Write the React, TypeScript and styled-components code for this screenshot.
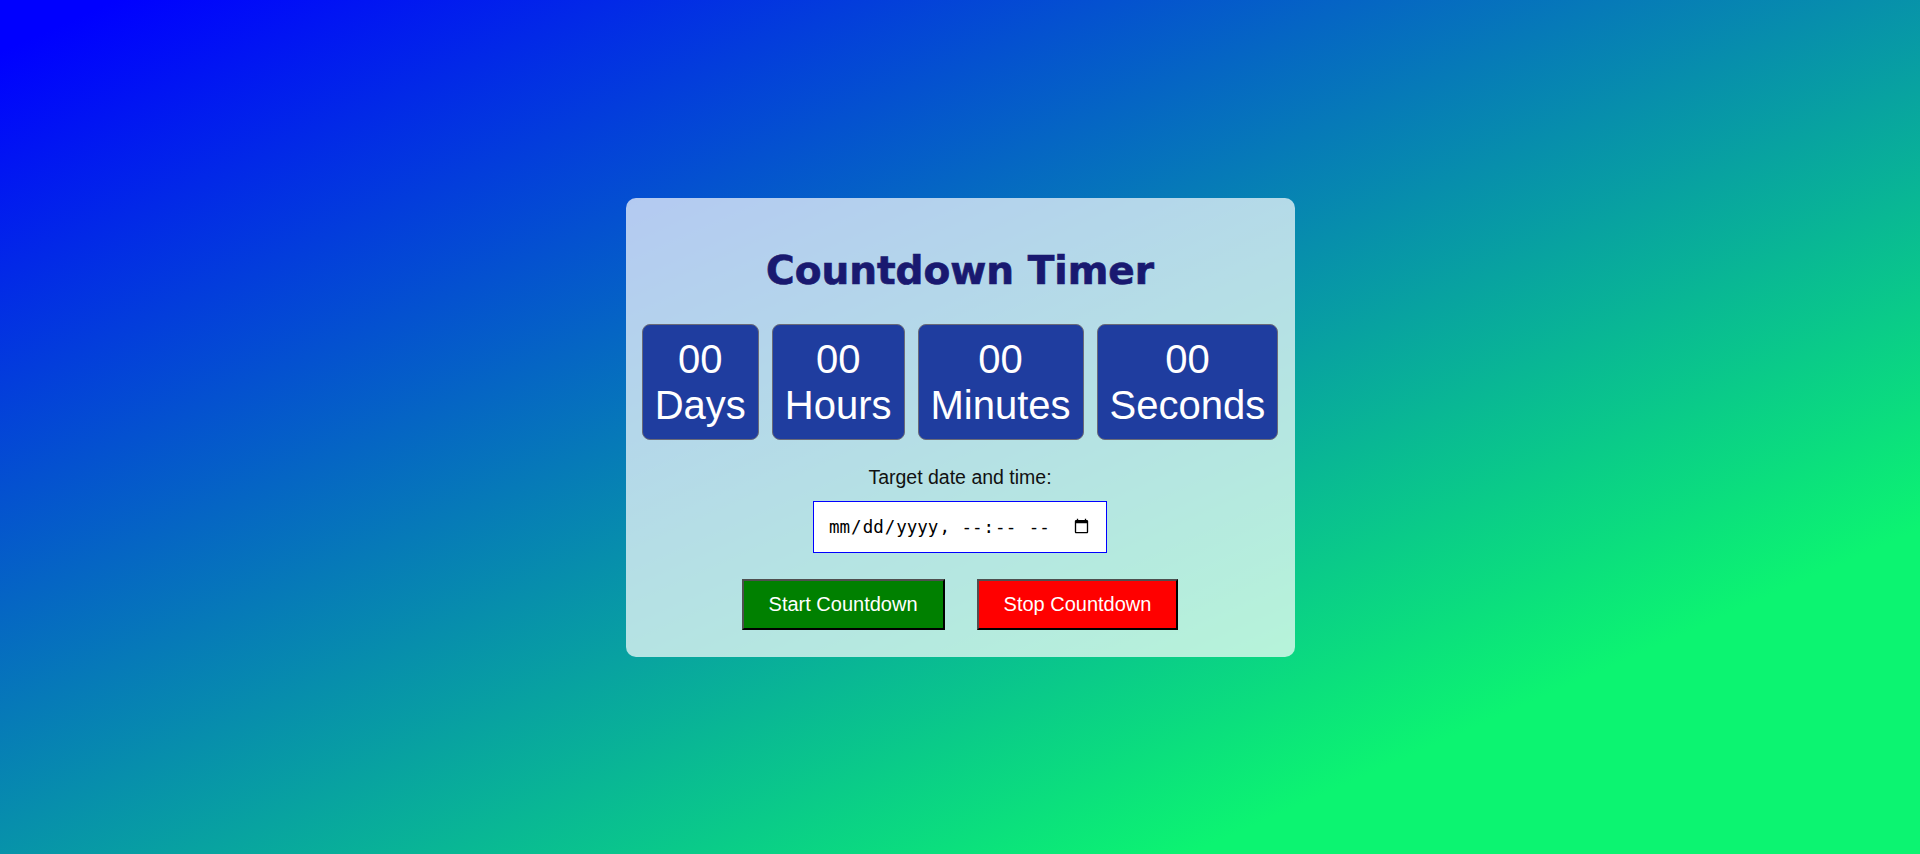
import React from "react";
import styled, { createGlobalStyle } from "styled-components";

const GlobalStyle = createGlobalStyle`
  html, body {
    margin: 0;
    padding: 0;
  }
  body {
    font-family: "Liberation Sans", Arial, sans-serif;
  }
`;

const Page = styled.div`
  min-height: 100vh;
  display: flex;
  align-items: center;
  justify-content: center;
  background: linear-gradient(to bottom right, #0000ff 3%, #0cf471 81%);
`;

const Card = styled.div`
  box-sizing: border-box;
  width: 669px;
  padding: 50px 15px 27px;
  border-radius: 10px;
  background: rgba(255, 255, 255, 0.7);
  display: flex;
  flex-direction: column;
  align-items: center;
`;

const Title = styled.h1`
  margin: 0;
  font-family: "Arial Black", "DejaVu Sans", sans-serif;
  font-weight: 900;
  font-size: 39px;
  line-height: 46px;
  color: #191970;
  -webkit-text-stroke: 0.7px #191970;
`;

const TimerRow = styled.div`
  margin-top: 30px;
  display: flex;
  gap: 13px;
  justify-content: center;
`;

const TimeBox = styled.div`
  display: flex;
  flex-direction: column;
  align-items: center;
  padding: 11px 12px;
  border: 1px solid #6a6a78;
  border-radius: 8px;
  background: #1f3d9f;
  color: #ffffff;
  font-size: 40px;
  line-height: 46px;
`;

const Label = styled.label`
  margin-top: 26px;
  font-size: 19.5px;
  line-height: 22px;
  color: #111;
`;

const DateInput = styled.input`
  margin-top: 13px;
  box-sizing: border-box;
  width: 294px;
  height: 52px;
  padding: 0 14px;
  border: 1px solid #0000ff;
  background: #ffffff;
  font-family: "DejaVu Sans Mono", monospace;
  font-size: 17.5px;
  color: #000;
  outline: none;

  &::-webkit-calendar-picker-indicator {
    margin-left: 10px;
  }
`;

const ButtonRow = styled.div`
  margin-top: 26px;
  display: flex;
  gap: 32px;
`;

const ActionButton = styled.button<{ $bg: string }>`
  padding: 12px 25px;
  border-width: 2px;
  border-style: solid;
  border-color: #4f4f4f #000 #000 #4f4f4f;
  background: ${(p) => p.$bg};
  color: #fff;
  font-family: "Liberation Sans", Arial, sans-serif;
  font-size: 20px;
  line-height: 23px;
  cursor: pointer;
`;

const units = ["Days", "Hours", "Minutes", "Seconds"];

export default function App() {
  return (
    <>
      <GlobalStyle />
      <Page>
        <Card>
          <Title>Countdown Timer</Title>
          <TimerRow>
            {units.map((u) => (
              <TimeBox key={u}>
                <span>00</span>
                <span>{u}</span>
              </TimeBox>
            ))}
          </TimerRow>
          <Label htmlFor="target">Target date and time:</Label>
          <DateInput id="target" type="datetime-local" />
          <ButtonRow>
            <ActionButton $bg="#008000">Start Countdown</ActionButton>
            <ActionButton $bg="#ff0000">Stop Countdown</ActionButton>
          </ButtonRow>
        </Card>
      </Page>
    </>
  );
}
